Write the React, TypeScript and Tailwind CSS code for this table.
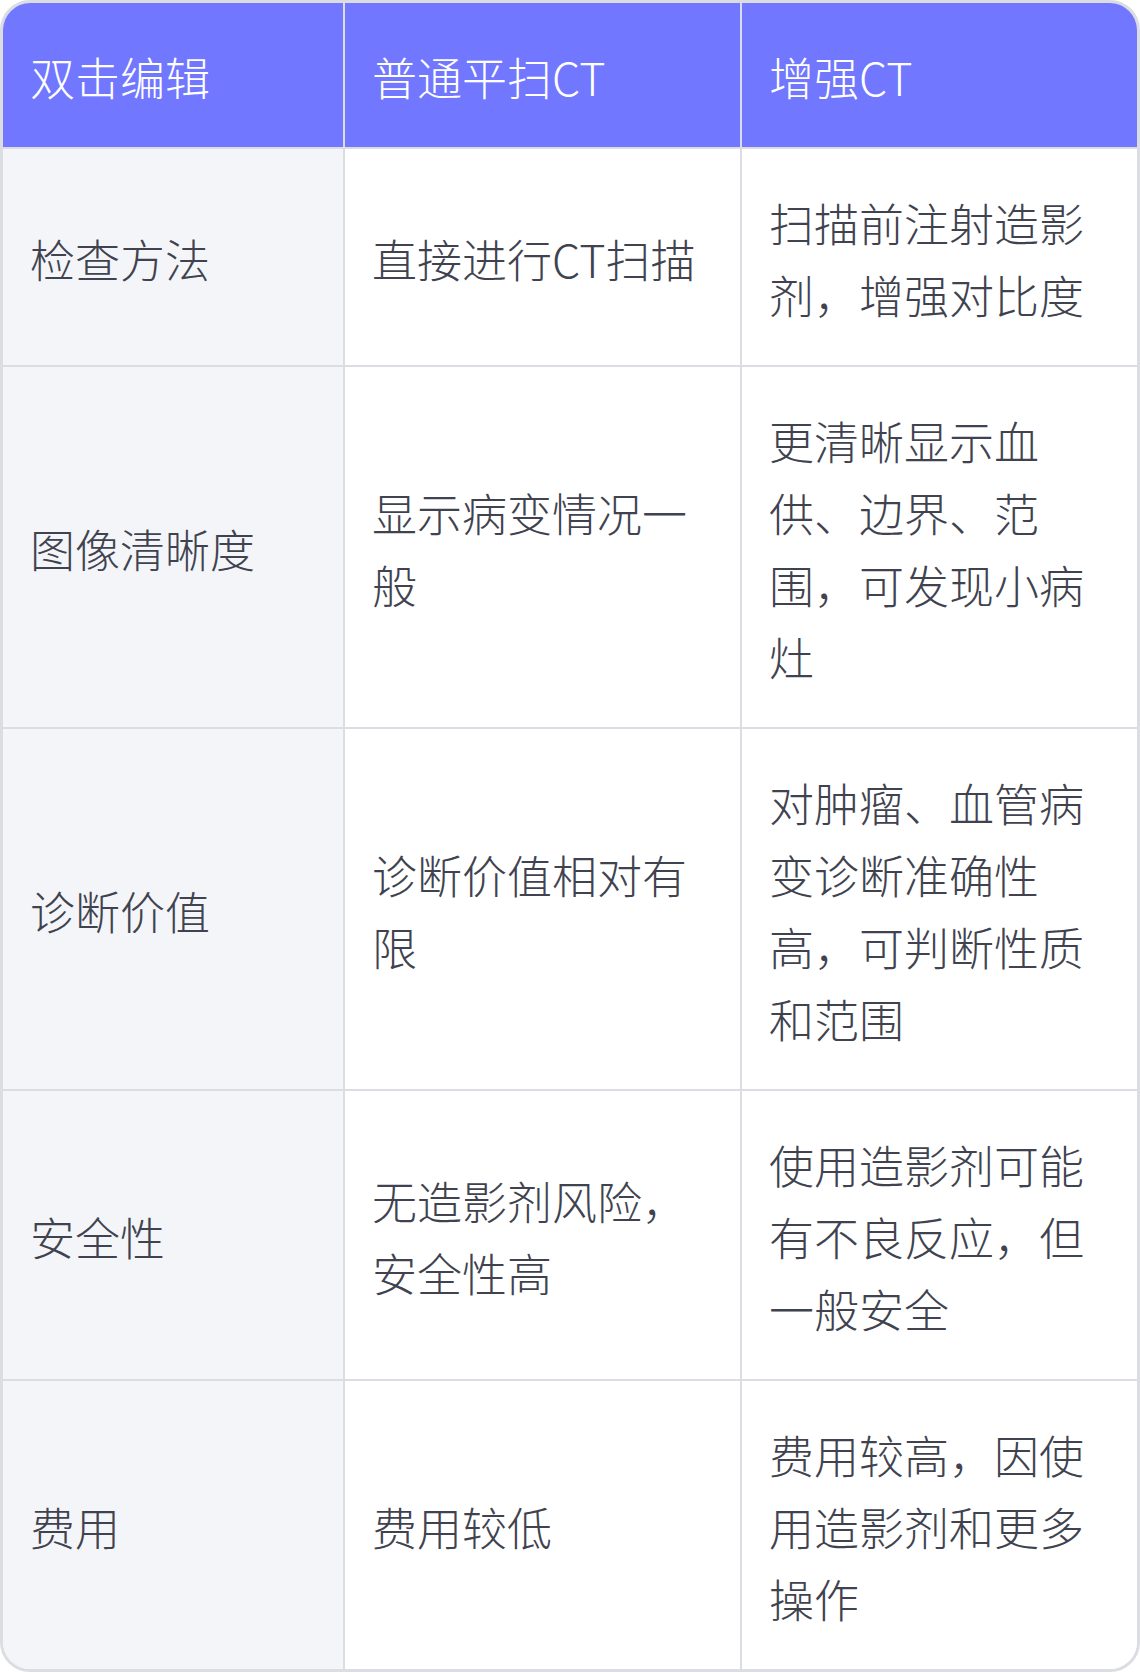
import React from "react";

const rows: [string, string, string][] = [
  ["检查方法", "直接进行CT扫描", "扫描前注射造影剂，增强对比度"],
  ["图像清晰度", "显示病变情况一般", "更清晰显示血供、边界、范围，可发现小病灶"],
  ["诊断价值", "诊断价值相对有限", "对肿瘤、血管病变诊断准确性高，可判断性质和范围"],
  ["安全性", "无造影剂风险，安全性高", "使用造影剂可能有不良反应，但一般安全"],
  ["费用", "费用较低", "费用较高，因使用造影剂和更多操作"],
];

export default function App() {
  return (
    <div
      className="w-[1140px] bg-white"
      style={{ fontFamily: '"Noto Sans CJK SC", "Noto Sans", sans-serif' }}
    >
      <div className="border-[3px] border-[#dcdde2] rounded-[30px] overflow-hidden">
        <div className="grid grid-cols-[342px_397px_395px] text-[45px] leading-[72px] font-light">
          <div className="bg-[#7177ff] text-white px-[27px] pt-[38px] pb-[34px] border-r-2 border-b-2 border-[#dcdde2] flex items-center">
            双击编辑
          </div>
          <div className="bg-[#7177ff] text-white px-[27px] pt-[38px] pb-[34px] border-r-2 border-b-2 border-[#dcdde2] flex items-center">
            普通平扫CT
          </div>
          <div className="bg-[#7177ff] text-white px-[27px] pt-[38px] pb-[34px] border-b-2 border-[#dcdde2] flex items-center">
            增强CT
          </div>
          {rows.map((r, i) => {
            const last = i === rows.length - 1;
            return (
              <React.Fragment key={i}>
                <div
                  className={
                    "bg-[#f4f5f9] text-[#40434f] px-[27px] pt-[38px] pb-[34px] border-r-2 border-[#dcdde2] flex items-center " +
                    (last ? "" : "border-b-2")
                  }
                >
                  {r[0]}
                </div>
                <div
                  className={
                    "bg-white text-[#40434f] px-[27px] pt-[38px] pb-[34px] border-r-2 border-[#dcdde2] flex items-center " +
                    (last ? "" : "border-b-2")
                  }
                >
                  <span>{r[1]}</span>
                </div>
                <div
                  className={
                    "bg-white text-[#40434f] px-[27px] pt-[38px] pb-[34px] border-[#dcdde2] flex items-center " +
                    (last ? "" : "border-b-2")
                  }
                >
                  <span>{r[2]}</span>
                </div>
              </React.Fragment>
            );
          })}
        </div>
      </div>
    </div>
  );
}
